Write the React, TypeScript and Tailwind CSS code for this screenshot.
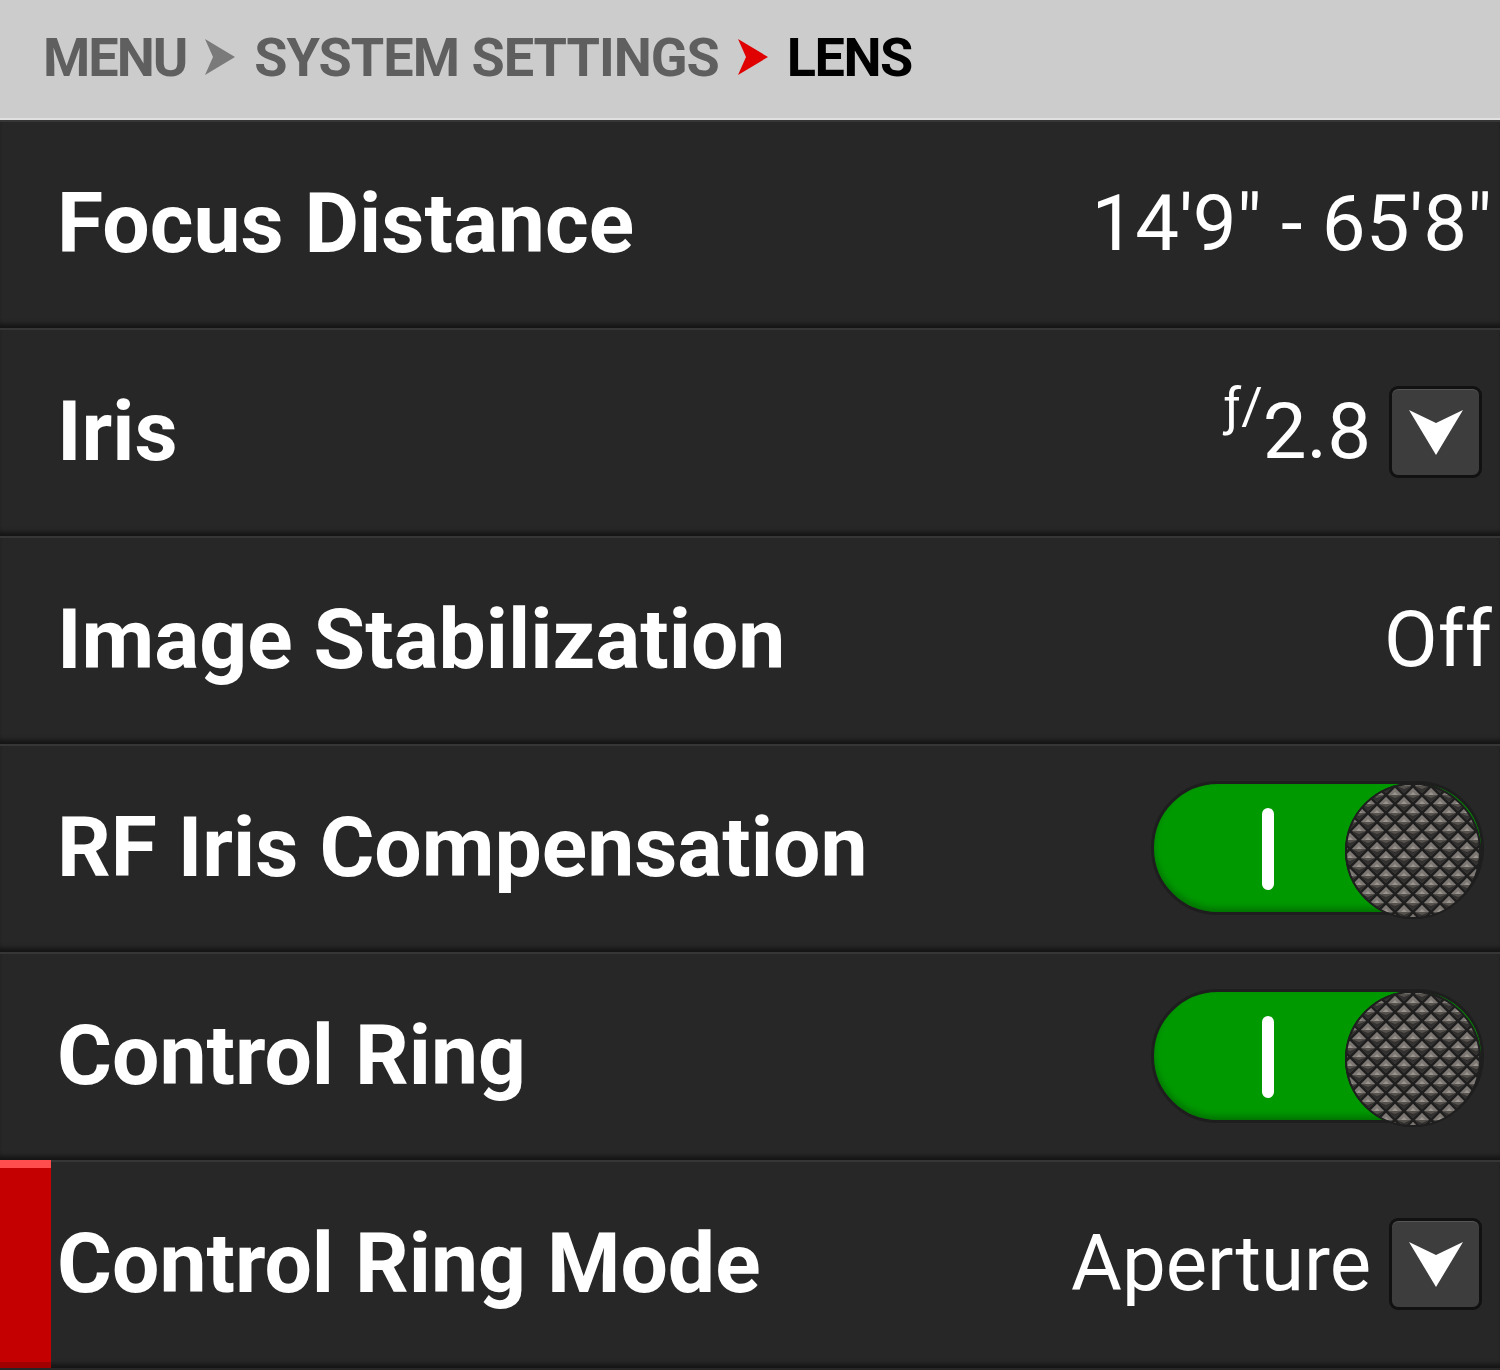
import React from 'react';

/**
 * LENS settings page: breadcrumb header + six setting rows.
 * Rows are 208px tall, separated by a dark bevel line.
 */

const font = { fontFamily: 'Roboto, "Noto Sans", sans-serif' };

function Chevron({ color }: { color: string }) {
  return (
    <svg width="34" height="40" viewBox="0 0 34 40" className="mx-[17px] shrink-0">
      <path d="M2 2 L32 20 L2 38 L10 20 Z" fill={color} />
    </svg>
  );
}

function DropButton() {
  return (
    <div className="mr-[10px] flex h-[92px] w-[93px] shrink-0 items-center justify-center rounded-[9px] border-[3px] border-[#111111] bg-[#3d3d3d] shadow-[inset_0_1px_0_#555]">
      <svg width="58" height="50" viewBox="0 0 58 50">
        <path d="M2 3 L29 16 L56 3 L29 48 Z" fill="#ffffff" />
      </svg>
    </div>
  );
}

function Knob({ id }: { id: string }) {
  return (
    <svg width="138" height="138" viewBox="0 0 138 138" className="absolute right-[-1px] top-[-2px]">
      <defs>
        <pattern id={`dia-${id}`} width="18" height="18" patternUnits="userSpaceOnUse" patternTransform="translate(6 4)">
          <rect width="18" height="18" fill="#1f1f1f" />
          {/* centre diamond + the four corner quarters */}
          {[
            [9, 9],
            [0, 0],
            [18, 0],
            [0, 18],
            [18, 18],
          ].map(([cx, cy]) => (
            <g key={`${cx}-${cy}`}>
              <path d={`M${cx} ${cy - 7} L${cx + 7} ${cy} L${cx} ${cy + 7} L${cx - 7} ${cy} Z`} fill="#55514d" />
              <path d={`M${cx} ${cy - 7} L${cx + 7} ${cy} L${cx - 7} ${cy} Z`} fill="#7d7873" />
              <path d={`M${cx} ${cy - 3} L${cx + 3} ${cy} L${cx - 3} ${cy} Z`} fill="#9a958f" />
              <path d={`M${cx - 7} ${cy} L${cx} ${cy + 7} L${cx + 7} ${cy} L${cx} ${cy + 3} Z`} fill="#333130" />
            </g>
          ))}
        </pattern>
        <clipPath id={`clip-${id}`}>
          <circle cx="69" cy="69" r="67" />
        </clipPath>
      </defs>
      <circle cx="69" cy="69" r="68" fill="#1a1a1a" />
      <rect width="138" height="138" fill={`url(#dia-${id})`} clipPath={`url(#clip-${id})`} />
      <circle cx="69" cy="69" r="67" fill="none" stroke="#1f1f1f" strokeWidth="2" />
    </svg>
  );
}

function Toggle({ id }: { id: string }) {
  return (
    <div className="relative mr-[8px] h-[134px] w-[333px] shrink-0 rounded-full border-[3px] border-[#1e1e1e] bg-[#009900] shadow-[inset_0_-4px_6px_rgba(0,0,0,0.25)]">
      <div className="absolute left-[108px] top-[24px] h-[82px] w-[12px] rounded-full bg-white" />
      <Knob id={id} />
    </div>
  );
}

function Row({
  label,
  children,
  active,
}: {
  label: string;
  children?: React.ReactNode;
  active?: boolean;
}) {
  return (
    <div className="relative flex h-[208px] items-center justify-between bg-[#272727] pl-[57px] pr-[8px] shadow-[inset_0_2px_0_#363636,inset_0_-6px_4px_-2px_#151515]">
      {active ? (
        <div className="absolute bottom-0 left-0 top-0 flex w-[51px] flex-col bg-[#c40000]">
          <div className="h-[8px] bg-[#ff4d4d]" />
          <div className="flex-1" />
          <div className="h-[6px] bg-[#a00000]" />
        </div>
      ) : null}
      <span className="text-[84px] font-bold leading-none text-white">{label}</span>
      <div className="flex items-center">{children}</div>
    </div>
  );
}

export default function App() {
  return (
    <div className="h-[1370px] w-[1500px] overflow-hidden bg-[#272727]" style={font}>
      <header className="flex h-[120px] items-center border-b-2 border-[#e0e0e0] bg-[#cccccc] pb-[4px] pl-[43px]">
        <span className="text-[54px] font-bold tracking-[-2px] text-[#5f5f5f]">MENU</span>
        <Chevron color="#7a7a7a" />
        <span className="text-[54px] font-bold tracking-[-1px] text-[#5f5f5f]">SYSTEM SETTINGS</span>
        <Chevron color="#e00000" />
        <span className="text-[54px] font-bold tracking-[-1.5px] text-black">LENS</span>
      </header>

      <Row label="Focus Distance">
        <span className="text-[78px] leading-none text-white">14'9" - 65'8"</span>
      </Row>
      <Row label="Iris">
        <span className="mr-[18px] flex items-start leading-none text-white">
          <span className="mt-[-12px] text-[52px]">ƒ/</span>
          <span className="text-[78px]">2.8</span>
        </span>
        <DropButton />
      </Row>
      <Row label="Image Stabilization">
        <span className="text-[78px] leading-none text-white">Off</span>
      </Row>
      <Row label="RF Iris Compensation">
        <Toggle id="rf" />
      </Row>
      <Row label="Control Ring">
        <Toggle id="cr" />
      </Row>
      <Row label="Control Ring Mode" active>
        <span className="mr-[18px] text-[78px] leading-none text-white">Aperture</span>
        <DropButton />
      </Row>
    </div>
  );
}
